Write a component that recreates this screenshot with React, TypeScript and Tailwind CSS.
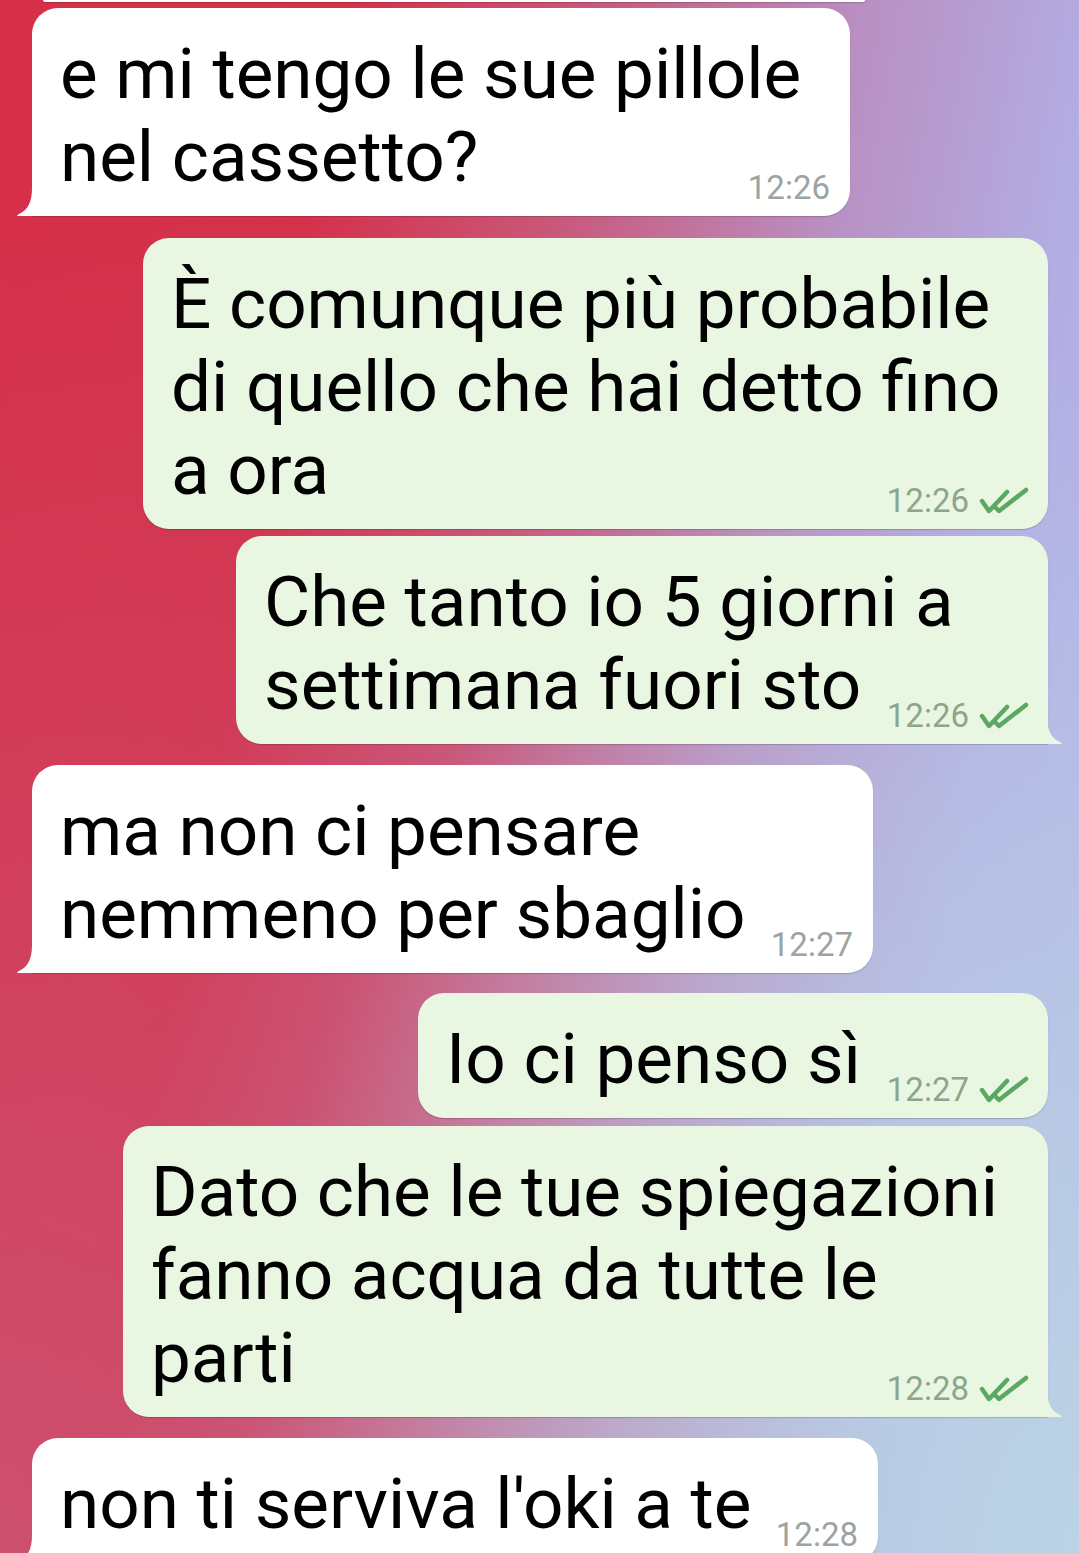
import * as React from 'react';

type Msg = {
  lines: string[];
  time: string;
  out: boolean;
  width: string;
  gap: string;
  tail?: boolean;
};

const messages: Msg[] = [
  { lines: ['e mi tengo le sue pillole', 'nel cassetto?'], time: '12:26', out: false, width: 'w-[818px]', gap: 'mt-[6px]', tail: true },
  { lines: ['È comunque più probabile', 'di quello che hai detto fino', 'a ora'], time: '12:26', out: true, width: 'w-[905px]', gap: 'mt-[22px]' },
  { lines: ['Che tanto io 5 giorni a', 'settimana fuori sto'], time: '12:26', out: true, width: 'w-[812px]', gap: 'mt-[7px]', tail: true },
  { lines: ['ma non ci pensare', 'nemmeno per sbaglio'], time: '12:27', out: false, width: 'w-[841px]', gap: 'mt-[21px]', tail: true },
  { lines: ['Io ci penso sì'], time: '12:27', out: true, width: 'w-[630px]', gap: 'mt-[20px]' },
  { lines: ['Dato che le tue spiegazioni', 'fanno acqua da tutte le', 'parti'], time: '12:28', out: true, width: 'w-[925px]', gap: 'mt-[8px]', tail: true },
  { lines: ["non ti serviva l'oki a te"], time: '12:28', out: false, width: 'w-[846px]', gap: 'mt-[21px]', tail: true },
];

function Ticks() {
  return (
    <svg width="50" height="28" viewBox="0 0 50 28" fill="none" className="ml-[10px]">
      <path d="M3 14 L10 24 L28 5" stroke="#5aa862" strokeWidth="4.5" strokeLinecap="round" strokeLinejoin="round" />
      <path d="M16 20 L20 24 L47 3" stroke="#5aa862" strokeWidth="4.5" strokeLinecap="round" strokeLinejoin="round" />
    </svg>
  );
}

function Tail({ out }: { out: boolean }) {
  if (out) {
    return (
      <svg width="16" height="28" viewBox="0 0 16 28" className="absolute right-[-15px] bottom-0">
        <path d="M0 0 C0 14 4 22 13 26 Q16 27.5 14 28 L0 28 Z" fill="#e9f7e2" />
      </svg>
    );
  }
  return (
    <svg width="16" height="28" viewBox="0 0 16 28" className="absolute left-[-16px] bottom-0">
      <path d="M16 0 C16 14 12 22 3 26 Q0 27.5 2 28 L16 28 Z" fill="#ffffff" />
    </svg>
  );
}

function Bubble({ m }: { m: Msg }) {
  const shape = m.tail ? (m.out ? 'rounded-[26px] rounded-br-none' : 'rounded-[26px] rounded-bl-none') : 'rounded-[26px]';
  return (
    <div
      className={`relative ${m.width} ${m.gap} ${shape} ${
        m.out ? 'self-end mr-[31px] bg-[#e9f7e2]' : 'self-start ml-[32px] bg-white'
      } shrink-0 flex flex-col pt-[24px] pb-[12px] pl-[28px] shadow-[0_1px_1px_rgba(0,0,0,0.18)]`}
    >
      <p className="text-[71px] leading-[83px] text-black whitespace-nowrap">
        {m.lines.map((l, i) => (
          <React.Fragment key={i}>
            {i > 0 && <br />}
            {l}
          </React.Fragment>
        ))}
      </p>
      <div className={`-mt-[27px] flex items-center justify-end ${m.out ? 'pr-[19px]' : 'pr-[20px]'}`}>
        <span className={`text-[33px] leading-[33px] ${m.out ? 'text-[#8da58b]' : 'text-[#9ba3a3]'}`}>{m.time}</span>
        {m.out && <Ticks />}
      </div>
      {m.tail && <Tail out={m.out} />}
    </div>
  );
}

export default function App() {
  return (
    <div
      className="w-[1079px] h-[1553px] overflow-hidden flex flex-col bg-[radial-gradient(ellipse_at_100%_100%,rgba(187,212,228,1)_0%,rgba(187,212,228,0)_55%),radial-gradient(ellipse_at_0%_100%,rgba(200,100,135,0.6)_0%,rgba(200,100,135,0)_60%),linear-gradient(100deg,#d62f49_0%,#d4324c_26%,#c9587a_44%,#b98fc2_64%,#b2aee4_82%,#b3b6e8_100%)]"
      style={{ fontFamily: 'Roboto, "Noto Sans", sans-serif' }}
    >
      <div className="ml-[43px] w-[822px] h-[2px] shrink-0 bg-white rounded-b-[2px] shadow-[0_1px_1px_rgba(0,0,0,0.18)]" />
      {messages.map((m, i) => (
        <Bubble key={i} m={m} />
      ))}
    </div>
  );
}
